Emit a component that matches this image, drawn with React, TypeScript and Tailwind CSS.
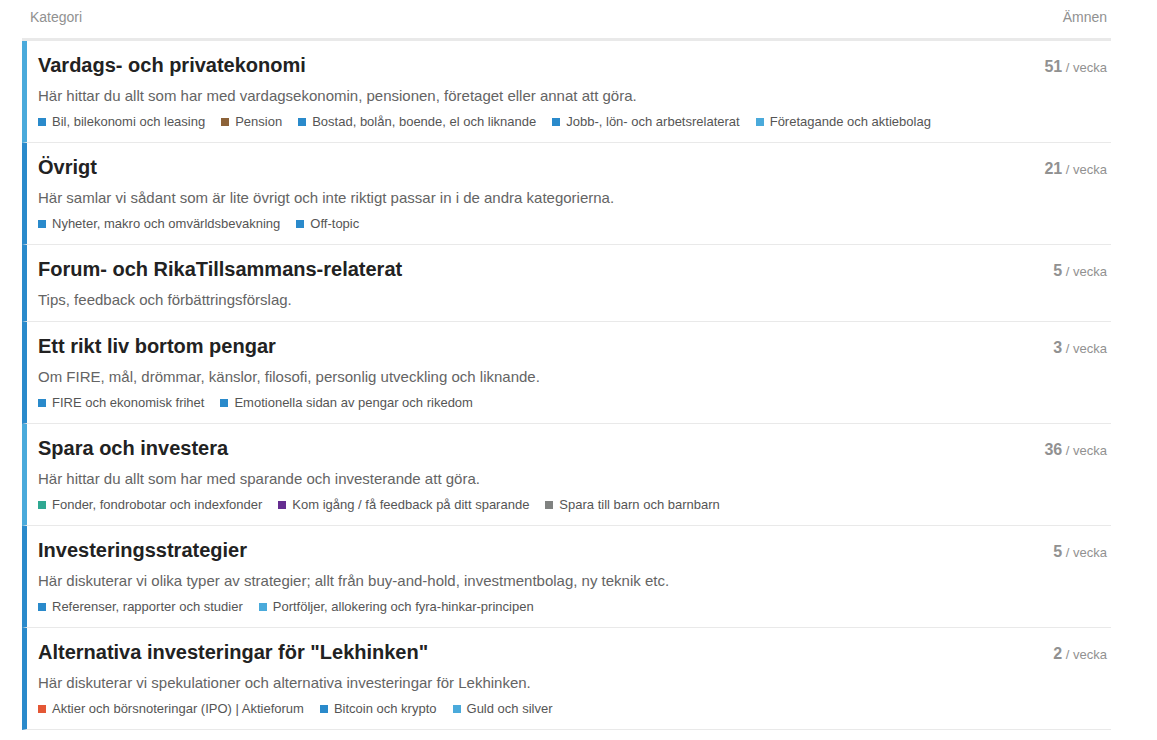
import React from 'react'

type Sub = { name: string; color: string }
type Category = {
  title: string
  description: string
  count: number
  border: string
  subs: Sub[]
}

const BLUE = 'bg-[#2a8acb]'
const LIGHT = 'bg-[#4aaadb]'

const categories: Category[] = [
  {
    title: 'Vardags- och privatekonomi',
    description: 'Här hittar du allt som har med vardagsekonomin, pensionen, företaget eller annat att göra.',
    count: 51,
    border: 'border-[#4aaadb]',
    subs: [
      { name: 'Bil, bilekonomi och leasing', color: BLUE },
      { name: 'Pension', color: 'bg-[#8c6238]' },
      { name: 'Bostad, bolån, boende, el och liknande', color: BLUE },
      { name: 'Jobb-, lön- och arbetsrelaterat', color: BLUE },
      { name: 'Företagande och aktiebolag', color: LIGHT },
    ],
  },
  {
    title: 'Övrigt',
    description: 'Här samlar vi sådant som är lite övrigt och inte riktigt passar in i de andra kategorierna.',
    count: 21,
    border: 'border-[#2a8acb]',
    subs: [
      { name: 'Nyheter, makro och omvärldsbevakning', color: BLUE },
      { name: 'Off-topic', color: BLUE },
    ],
  },
  {
    title: 'Forum- och RikaTillsammans-relaterat',
    description: 'Tips, feedback och förbättringsförslag.',
    count: 5,
    border: 'border-[#2a8acb]',
    subs: [],
  },
  {
    title: 'Ett rikt liv bortom pengar',
    description: 'Om FIRE, mål, drömmar, känslor, filosofi, personlig utveckling och liknande.',
    count: 3,
    border: 'border-[#2a8acb]',
    subs: [
      { name: 'FIRE och ekonomisk frihet', color: BLUE },
      { name: 'Emotionella sidan av pengar och rikedom', color: BLUE },
    ],
  },
  {
    title: 'Spara och investera',
    description: 'Här hittar du allt som har med sparande och investerande att göra.',
    count: 36,
    border: 'border-[#4aaadb]',
    subs: [
      { name: 'Fonder, fondrobotar och indexfonder', color: 'bg-[#2fa892]' },
      { name: 'Kom igång / få feedback på ditt sparande', color: 'bg-[#652d90]' },
      { name: 'Spara till barn och barnbarn', color: 'bg-[#808281]' },
    ],
  },
  {
    title: 'Investeringsstrategier',
    description: 'Här diskuterar vi olika typer av strategier; allt från buy-and-hold, investmentbolag, ny teknik etc.',
    count: 5,
    border: 'border-[#2a8acb]',
    subs: [
      { name: 'Referenser, rapporter och studier', color: BLUE },
      { name: 'Portföljer, allokering och fyra-hinkar-principen', color: LIGHT },
    ],
  },
  {
    title: 'Alternativa investeringar för "Lekhinken"',
    description: 'Här diskuterar vi spekulationer och alternativa investeringar för Lekhinken.',
    count: 2,
    border: 'border-[#2a8acb]',
    subs: [
      { name: 'Aktier och börsnoteringar (IPO) | Aktieforum', color: 'bg-[#e45735]' },
      { name: 'Bitcoin och krypto', color: BLUE },
      { name: 'Guld och silver', color: LIGHT },
    ],
  },
]

function CategoryRow({ cat }: { cat: Category }) {
  const hasSubs = cat.subs.length > 0
  return (
    <div className={`flex border-b border-b-[#e9e9e9] border-l-[5px] ${cat.border}`}>
      <div className={`flex-1 pl-[11px] pt-3 ${hasSubs ? 'pb-[10px]' : 'pb-[11px]'}`}>
        <h2 className="text-[20px] leading-6 font-bold text-[#222]">{cat.title}</h2>
        <p className="mt-[9px] text-[15px] leading-5 text-[#646464]">{cat.description}</p>
        {hasSubs && (
          <div className="mt-[6px] flex flex-wrap gap-x-4 text-[13px] leading-5 text-[#555]">
            {cat.subs.map((s) => (
              <span key={s.name} className="flex items-center">
                <span className={`mr-1.5 inline-block h-2 w-2 ${s.color}`} />
                {s.name}
              </span>
            ))}
          </div>
        )}
      </div>
      <div className="pr-1 pt-[14px] text-right whitespace-nowrap text-[#919191]">
        <span className="text-[16px] font-bold leading-5">{cat.count}</span>
        <span className="text-[13px] leading-5"> / vecka</span>
      </div>
    </div>
  )
}

export default function App() {
  return (
    <div className="min-h-screen bg-white font-['Liberation_Sans',Arial,sans-serif]">
      <div className="ml-[22px] w-[1089px]">
        {/* Header */}
        <div className="flex justify-between border-b-[3px] border-b-[#e9e9e9] pl-2 pr-1 pt-[7px] pb-[11px] text-[14px] leading-5 text-[#919191]">
          <span>Kategori</span>
          <span>Ämnen</span>
        </div>
        {categories.map((c) => (
          <CategoryRow key={c.title} cat={c} />
        ))}
      </div>
    </div>
  )
}
